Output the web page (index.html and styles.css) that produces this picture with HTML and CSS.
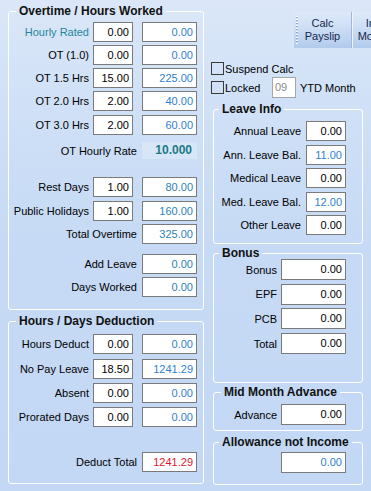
FILE: index.html
```html
<!DOCTYPE html>
<html lang="en">
<head>
<meta charset="utf-8">
<title>Payroll - Overtime</title>
<link rel="stylesheet" href="styles.css">
</head>
<body>
<div class="page">
  <div class="col-left">
    <fieldset class="grp g-ot">
      <legend>Overtime / Hours Worked</legend>
      <div class="rows">
        <div class="row"><span class="lbl teal">Hourly Rated</span><span class="in">0.00</span><span class="in w55 blue">0.00</span></div>
        <div class="row"><span class="lbl">OT (1.0)</span><span class="in">0.00</span><span class="in w55 blue">0.00</span></div>
        <div class="row"><span class="lbl">OT 1.5 Hrs</span><span class="in">15.00</span><span class="in w55 blue">225.00</span></div>
        <div class="row"><span class="lbl">OT 2.0 Hrs</span><span class="in">2.00</span><span class="in w55 blue">40.00</span></div>
        <div class="row add1"><span class="lbl">OT 3.0 Hrs</span><span class="in">2.00</span><span class="in w55 blue">60.00</span></div>
        <div class="row rate"><span class="lbl span2">OT Hourly Rate</span><span class="rate-val">10.000</span></div>
        <div class="row add15"><span class="lbl">Rest Days</span><span class="in">1.00</span><span class="in w55 sea">80.00</span></div>
        <div class="row add1"><span class="lbl">Public Holidays</span><span class="in">1.00</span><span class="in w55 sea">160.00</span></div>
        <div class="row"><span class="lbl span2">Total Overtime</span><span class="in w55 sea">325.00</span></div>
        <div class="row add7"><span class="lbl span2">Add Leave</span><span class="in w55 sea">0.00</span></div>
        <div class="row"><span class="lbl span2">Days Worked</span><span class="in w55 sea">0.00</span></div>
      </div>
    </fieldset>

    <fieldset class="grp g-ded">
      <legend>Hours / Days Deduction</legend>
      <div class="rows">
        <div class="row"><span class="lbl">Hours Deduct</span><span class="in">0.00</span><span class="in w55 blue">0.00</span></div>
        <div class="row add2"><span class="lbl">No Pay Leave</span><span class="in">18.50</span><span class="in w55 blue">1241.29</span></div>
        <div class="row add1"><span class="lbl">Absent</span><span class="in">0.00</span><span class="in w55 blue">0.00</span></div>
        <div class="row add1"><span class="lbl">Prorated Days</span><span class="in">0.00</span><span class="in w55 blue">0.00</span></div>
        <div class="row add22"><span class="lbl span2">Deduct Total</span><span class="in w55 red">1241.29</span></div>
      </div>
    </fieldset>
  </div>

  <div class="col-right">
    <div class="toolbar">
      <div class="tbtn first"><span class="grip"></span><span class="tb-text">Calc<br>Payslip</span></div>
      <div class="tbtn second"><span class="tb-text">Init<br>Month</span></div>
    </div>

    <div class="chk-row">
      <span class="chk"></span><span class="chk-lbl">Suspend Calc</span>
    </div>
    <div class="chk-row locked">
      <span class="chk"></span><span class="chk-lbl fixed">Locked</span>
      <span class="month-box">09</span>
      <span class="ytd">YTD Month</span>
    </div>

    <fieldset class="grp rgrp g-leave">
      <legend>Leave Info</legend>
      <div class="rows">
        <div class="rrow"><span class="rlbl">Annual Leave</span><span class="in">0.00</span></div>
        <div class="rrow"><span class="rlbl">Ann. Leave Bal.</span><span class="in blue">11.00</span></div>
        <div class="rrow"><span class="rlbl">Medical Leave</span><span class="in">0.00</span></div>
        <div class="rrow"><span class="rlbl">Med. Leave Bal.</span><span class="in blue">12.00</span></div>
        <div class="rrow"><span class="rlbl">Other Leave</span><span class="in">0.00</span></div>
      </div>
    </fieldset>

    <fieldset class="grp rgrp g-bonus">
      <legend>Bonus</legend>
      <div class="rows">
        <div class="rrow"><span class="rlbl">Bonus</span><span class="in w65">0.00</span></div>
        <div class="rrow"><span class="rlbl">EPF</span><span class="in w65">0.00</span></div>
        <div class="rrow"><span class="rlbl">PCB</span><span class="in w65">0.00</span></div>
        <div class="rrow"><span class="rlbl">Total</span><span class="in w65">0.00</span></div>
      </div>
    </fieldset>

    <fieldset class="grp rgrp g-mid">
      <legend>Mid Month Advance</legend>
      <div class="rows">
        <div class="rrow"><span class="rlbl">Advance</span><span class="in w65 adv">0.00</span></div>
      </div>
    </fieldset>

    <fieldset class="grp rgrp g-allow">
      <legend>Allowance not Income</legend>
      <div class="rows">
        <div class="rrow"><span class="in w65 blue">0.00</span></div>
      </div>
    </fieldset>
  </div>
</div>
</body>
</html>
```

FILE: styles.css
```css
html, body {
  margin: 0;
  padding: 0;
  overflow: hidden;
}

body {
  width: 371px;
  height: 491px;
  background: linear-gradient(to bottom, #dbe7f8 0%, #d0e1f7 20%, #c6daf5 50%, #c3d8f5 100%);
  font-family: "Liberation Sans", Arial, sans-serif;
  font-size: 11px;
  color: #000;
}

.page {
  display: flex;
  padding-left: 8px;
}

/* ---------- columns ---------- */
.col-left {
  width: 196px;
  flex: none;
  display: flex;
  flex-direction: column;
}

.col-right {
  width: 160px;
  flex: none;
  margin-left: 7px;
  display: flex;
  flex-direction: column;
}

/* ---------- group boxes ---------- */
.grp {
  margin: 0;
  padding: 0;
  border: 1px solid #fff;
  border-radius: 3px;
  min-width: 0;
  box-sizing: border-box;
}

.grp legend {
  font-weight: bold;
  font-size: 12px;
  line-height: 11px;
  height: 11px;
  padding: 0 3px;
  margin-left: 7px;
  color: #111;
  white-space: nowrap;
}

.rows {
  display: flex;
  flex-direction: column;
  gap: 3px;
}

.g-ot {
  margin-top: 6px;
  padding: 5px 6px 12px 0;
}

.g-ded {
  margin-top: 6px;
  padding: 7px 6px 11px 0;
}

.rgrp {
  width: 150px;
  margin-left: 2px;
  padding-right: 16px;
}

.rgrp legend {
  margin-left: 5px;
}

.g-leave {
  margin-top: 6px;
  padding-top: 6px;
  padding-bottom: 8px;
}

.g-leave .rows {
  gap: 3.5px;
}

.g-bonus {
  margin-top: 4px;
  padding-top: 0;
  padding-bottom: 28px;
}

.g-bonus .rows {
  gap: 3.7px;
}

.g-mid {
  margin-top: 4px;
  padding-top: 6px;
  padding-bottom: 5px;
}

.g-mid legend {
  margin-left: 7px;
}

.g-allow {
  margin-top: 6px;
  padding-top: 4px;
  padding-bottom: 11px;
}

/* ---------- left rows ---------- */
.row {
  display: grid;
  grid-template-columns: 84px 49px 55px;
  height: 20px;
  align-items: center;
}

.row .w55 {
  grid-column: 3;
}

.add1 { margin-top: 1px; }
.add2 { margin-top: 2px; }
.add7 { margin-top: 7px; }
.add15 { margin-top: 15px; }
.add22 { margin-top: 22px; }

.lbl {
  text-align: right;
  padding-right: 4px;
  white-space: nowrap;
}

.lbl.span2 {
  grid-column: 1 / 3;
  padding-right: 5px;
}

.teal {
  color: #1f86a0;
}

.row.rate {
  margin-top: 4px;
  height: 17px;
}

.rate-val {
  grid-column: 3;
  height: 17px;
  line-height: 17px;
  text-align: right;
  padding-right: 5px;
  font-weight: bold;
  font-size: 12px;
  color: #1b7a85;
  background: rgba(255, 255, 255, 0.22);
}

/* ---------- inputs ---------- */
.in {
  box-sizing: border-box;
  display: block;
  width: 40px;
  height: 20px;
  border: 1px solid #7a7a7a;
  background: #fff;
  text-align: right;
  padding-right: 3px;
  line-height: 18px;
  white-space: nowrap;
}

.in.w55 { width: 55px; }
.in.w65 { width: 65px; }

.blue { color: #2f7fd2; }
.sea { color: #2d82b6; }
.red { color: #e0142e; }

.g-bonus .in,
.g-mid .in {
  height: 21px;
  line-height: 19px;
}

.g-allow .in {
  height: 21px;
  line-height: 19px;
}

/* ---------- right rows ---------- */
.rrow {
  display: flex;
  justify-content: flex-end;
  align-items: center;
  gap: 5px;
}

.g-bonus .rrow,
.g-mid .rrow {
  gap: 4px;
}

.rlbl {
  flex: 1;
  text-align: right;
  white-space: nowrap;
}

/* ---------- toolbar ---------- */
.toolbar {
  display: flex;
  margin-top: 12px;
  margin-left: 83px;
  height: 36px;
}

.tbtn {
  flex: none;
  height: 36px;
  display: flex;
  align-items: center;
  justify-content: center;
  position: relative;
  background: linear-gradient(to bottom, #dfeaf9 0%, #cadcf4 50%, #b2cbec 100%);
  color: #15294b;
  text-align: center;
  line-height: 13px;
}

.tbtn.first {
  width: 57px;
  border-right: 1px solid #9fb7d8;
}

.tbtn.second {
  width: 40px;
  border-left: 1px solid #eef4fc;
}

.grip {
  position: absolute;
  left: 2px;
  top: 4px;
  width: 2px;
  height: 28px;
  background: repeating-linear-gradient(to bottom, #ffffff 0 1px, #8ea8cc 1px 2px, transparent 2px 3px);
}

.tb-text {
  white-space: nowrap;
}

/* ---------- check rows ---------- */
.chk-row {
  display: flex;
  align-items: center;
  height: 13px;
  margin-top: 14px;
}

.chk-row.locked {
  height: 21px;
  margin-top: 2px;
}

.chk {
  box-sizing: border-box;
  width: 13px;
  height: 13px;
  border: 1px solid #3a3a3a;
  flex: none;
}

.chk-lbl {
  margin-left: 1px;
  white-space: nowrap;
}

.chk-lbl.fixed {
  width: 47px;
}

.month-box {
  box-sizing: border-box;
  width: 24px;
  height: 21px;
  border: 1px solid #a6a6a6;
  background: #fff;
  color: #8a8a8a;
  padding-left: 2px;
  line-height: 19px;
}

.ytd {
  margin-left: 4px;
  white-space: nowrap;
}
```
